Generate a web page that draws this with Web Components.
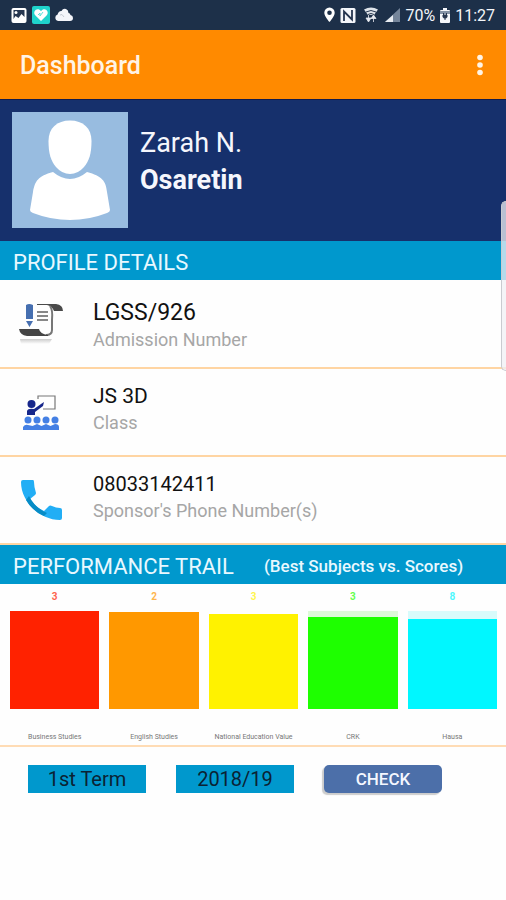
<!DOCTYPE html>
<html lang="en">
<head>
<meta charset="utf-8">
<meta name="viewport" content="width=device-width, initial-scale=1">
<title>Dashboard</title>
<style>
body { margin: 0; background: #fefefe; font-family: Roboto, "Noto Sans", sans-serif; color: #111; }
</style>
</head>
<body>
<student-dashboard></student-dashboard>
<script>
const define = (name, html, setup) => customElements.define(name, class extends HTMLElement {
  connectedCallback() {
    if (this.shadowRoot) return;
    const root = this.attachShadow({ mode: 'open' });
    const template = document.createElement('template');
    template.innerHTML = html;
    root.append(template.content.cloneNode(true));
    if (setup) setup(this, root);
  }
});

define('status-bar', `
<style>
:host { display: flex; justify-content: space-between; align-items: center; height: 30px; padding: 0 11px; background: #1d3049; color: #f4f6fa; }
div { display: flex; align-items: center; gap: 4px; }
svg { display: block; }
span { font-size: 16px; line-height: 30px; padding-top: 2px; white-space: nowrap; }
</style>
<div>
  <svg width="17" height="17" viewBox="0 0 17 17"><rect x=".5" y="1" width="15" height="15" rx="2" fill="#fff"/><path d="M2.500 3h11v7l-3-3-3 4-3-2-2 3z" fill="#26364f"/><circle cx="5" cy="5.500" r="1.500" fill="#fff"/></svg>
  <svg width="18" height="18" viewBox="0 0 18 18"><rect width="18" height="18" rx="2" fill="#1fd3cb"/><path d="M9 15 3.200 9.200C.7 6.500 3.500 2.500 6.500 3.300Q8.200 3.700 9 5.200Q9.800 3.700 11.500 3.300C14.500 2.500 17.300 6.500 14.800 9.200z" fill="#fff"/><path d="M6 9l2-2v3l3-4" fill="none" stroke="#5ee0d8"/></svg>
  <svg width="20" height="16" viewBox="0 0 20 16"><path d="M4 14a3.300 3.300 0 0 1-.4-6.400Q4.500 3.800 7.500 4 9 1 12 2q2.500 1 2.500 4 1.500 0 2 2 2.500.5 2.500 3 0 3-3 3z" fill="#f4f5fa"/><path d="M6 8q2-2 4 2" fill="none" stroke="#c5cad3"/></svg>
</div>
<div>
  <svg width="13" height="18" viewBox="0 0 13 18"><path d="M6.500 1.500a5.200 5.200 0 0 0-5.200 5.200C1.300 10.500 6.500 16 6.500 16s5.200-5.500 5.200-9.300a5.200 5.200 0 0 0-5.200-5.200zm0 3a2.300 2.300 0 1 1 0 4.600 2.300 2.300 0 0 1 0-4.600z" fill="#fff" fill-rule="evenodd"/></svg>
  <svg width="16" height="17" viewBox="0 0 16 17"><rect x=".5" y="1" width="15" height="15" rx="1.500" fill="#f4f6fa"/><path d="M4 14V4.500l8 8V3" fill="none" stroke="#26364f" stroke-width="1.800"/></svg>
  <svg width="20" height="18" viewBox="0 0 20 18"><path d="M4 3.500Q11 -.5 18 3.500L14 9H8z" fill="#dfe4ea"/><path d="M6 6q5-3 10 0M8 8.500q3-2 6 0" fill="none" stroke="#26364f"/><path d="M8.500 9v4M6 12l2.500 4 2.500-4zM13.500 16v-4M11 12.500l2.500-3.500 2.500 3.500z" fill="#e7eaf0" stroke="#e7eaf0" stroke-width=".8"/></svg>
  <svg width="17" height="16" viewBox="0 0 17 16"><path d="M1 15 16 1v14z" fill="#75859a"/><path d="M1 15 9 8v7z" fill="#e8ecf1"/></svg>
  <span>70%</span>
  <svg width="12" height="17" viewBox="0 0 12 17"><path d="M4 1h4v2h2q1 0 1 1v11q0 1-1 1H2q-1 0-1-1V4q0-1 1-1h2z" fill="#f4f6fa"/><path d="M1 4h10v3H1z" fill="#8492a5"/><path d="M4.500 6v2M7.500 6v2M4 8h4v2q0 1-2 1t-2-1zM6 10v3" fill="#26364f" stroke="#26364f"/></svg>
  <span>11:27</span>
</div>`);

define('app-toolbar', `
<style>
:host { display: flex; justify-content: space-between; align-items: center; box-sizing: border-box; height: 69px; padding: 2px 20px 0; background: #ff8a00; color: #fff4e6; }
h1 { margin: 0; font-size: 25px; line-height: 32px; font-weight: 500; }
button { display: block; padding: 0; border: 0; background: none; color: #fff4e6; }
svg { display: block; }
</style>
<h1><slot></slot></h1>
<button type="button" aria-label="More options"><svg width="12" height="24" viewBox="0 0 12 24" fill="currentColor"><circle cx="6" cy="3.500" r="2.800"/><circle cx="6" cy="11" r="2.800"/><circle cx="6" cy="18.500" r="2.800"/></svg></button>`);

define('profile-banner', `
<style>
:host { display: flex; gap: 12px; padding: 12px; background: #16306c; color: #f5f6fc; border-top: 1px solid #121c4b; box-sizing: border-box; height: 142px; }
svg { flex: none; display: block; }
p { margin: 0; font-size: 27px; line-height: 37px; }
p + p { font-weight: 700; }
div { padding-top: 13px; }
</style>
<svg width="116" height="116" viewBox="0 0 116 116" role="img" aria-label="Student photo"><rect width="116" height="116" fill="#98bce0"/><path d="M58 8.500C45 8.500 36.500 16 36.500 29C36.500 42 39 49 44 55Q50 62 58 62Q66 62 72 55C77 49 79.500 42 79.500 29C79.500 16 71 8.500 58 8.500Z" fill="#fff"/><path d="M41 60Q58 74 75 60C90 64 94 69 95 80L98 98Q98 100 95 101Q77 108 58 108Q39 108 21 101Q18 100 18 98L21 80C23 69 26 64 41 60Z" fill="#fff"/></svg>
<div><p><slot name="first"></slot></p><p><slot name="last"></slot></p></div>`);

define('section-title', `
<style>
:host { display: flex; align-items: center; gap: 30px; box-sizing: border-box; height: 39px; padding: 4px 13px 0; background: #0098cd; color: #e9f8ff; white-space: nowrap; }
h2 { margin: 0; font-size: 22px; line-height: 35px; font-weight: 400; }
::slotted(span) { font-size: 17px; line-height: 35px; font-weight: 500; }
</style>
<h2><slot></slot></h2><slot name="note"></slot>`);

define('detail-row', `
<style>
:host { display: flex; align-items: center; gap: 30px; box-sizing: border-box; height: 88px; padding: 0 18px; background: #fefefe; border-bottom: 2px solid #ffd5a3; }
:host([lead]) { height: 89px; }
::slotted(svg) { flex: none; display: block; }
dl { margin: 0; padding-bottom: 6px; display: flex; flex-direction: column; }
:host([lead]) dl { padding: 4px 0 0; }
dt { order: 2; font-size: 18px; line-height: 26px; color: #a6a6a6; }
dd { margin: 0; order: 1; font-size: var(--value-size, 21px); line-height: 28px; color: #111; }
</style>
<slot name="icon"></slot>
<dl><dt><slot name="label"></slot></dt><dd><slot></slot></dd></dl>`);

define('subject-bar', `
<style>
:host { display: flex; flex-direction: column; align-items: center; flex: 1 1 0; min-width: 0; white-space: nowrap; }
.score { font-size: 10px; line-height: 12px; font-weight: 700; color: var(--bar); opacity: .7; }
.track { align-self: stretch; display: flex; align-items: flex-end; height: 98px; margin: 8px 0 22px; background: var(--track, transparent); }
.fill { flex: 1; background: var(--bar); }
.name { font-size: 7px; line-height: 12px; color: #777; }
</style>
<span class="score"></span><div class="track"><div class="fill"></div></div><span class="name"><slot></slot></span>`,
(host, root) => {
  root.querySelector('.score').textContent = host.getAttribute('score');
  root.querySelector('.fill').style.height = host.getAttribute('level') + '%';
});

define('subject-chart', `
<style>
:host { display: flex; gap: 10px; box-sizing: border-box; height: 163px; padding: 7px 9px 0 10px; background: #fefefe; border-bottom: 2px solid #ffdcb5; }
</style>
<slot></slot>`);

define('term-form', `
<style>
:host { display: block; }
form { display: flex; align-items: center; gap: 30px; padding: 18px 28px; }
select, button { box-sizing: border-box; flex: 0 0 118px; height: 28px; margin: 0; padding: 0; font-family: inherit; text-align: center; text-align-last: center; }
select { appearance: none; border: 0; border-radius: 0; background: #0098cd; color: #0b2233; font-size: 20px; }
button { border: 0; border-radius: 5px; background: #4c6fa9; color: #f4f7ff; font-size: 17px; font-weight: 500; box-shadow: -2px 2px 1px #ccc; }
</style>
<form>
<select aria-label="Term"><option>1st Term</option><option>2nd Term</option><option>3rd Term</option></select>
<select aria-label="Session"><option>2018/19</option><option>2017/18</option></select>
<button type="button">CHECK</button>
</form>`);

define('edge-handle', `
<style>
:host { position: absolute; top: 201px; right: 0; width: 5px; height: 170px; box-sizing: border-box; border: 1px solid #c9cbd0; border-right: 0; border-radius: 5px 0 0 5px; background: rgba(240,240,244,.75); }
</style>`);

define('student-dashboard', `
<style>
:host { display: block; position: relative; }
</style>
<status-bar></status-bar>
<app-toolbar>Dashboard</app-toolbar>
<profile-banner><span slot="first">Zarah N.</span><span slot="last">Osaretin</span></profile-banner>
<section-title>PROFILE DETAILS</section-title>
<detail-row lead style="--value-size:23px">
  <svg slot="icon" width="45" height="44" viewBox="0 0 45 44"><defs><linearGradient id="shade" x2="0" y2="1"><stop stop-color="#ccc"/><stop offset="1" stop-color="#fff"/></linearGradient></defs><path d="M2 37h32l-3 5H3z" fill="url(#shade)"/><path d="M19 2H38Q45 3 45 9H36Q34 4 29 3H19z" fill="#4a4a4a"/><path d="M32 4Q35 8 34 18V28Q34 33 28 33" fill="none" stroke="#777" stroke-width="2"/><path d="M1 27H21Q22 32 30 33V34H9Q2 33 1 27z" fill="#444"/><path d="M19 10h11M19 14h11M19 18h11" stroke="#888" stroke-width="2"/><path d="M8 3Q11 1 15 3V17H8zM8 19h7l-3.500 6z" fill="#466fb0"/></svg>
  LGSS/926<span slot="label">Admission Number</span>
</detail-row>
<detail-row>
  <svg slot="icon" width="45" height="44" viewBox="0 0 45 44"><path d="M20 9V6H37V19H25" fill="none" stroke="#777" stroke-width="1.200"/><circle cx="13.500" cy="14" r="4" fill="#17278b"/><path d="M9 25V21Q10 18 16 19L23 14 26 12 25 16 17 22V25z" fill="#17278b"/><g fill="#4480e4"><circle cx="10" cy="30" r="3.500"/><circle cx="19" cy="30" r="3.500"/><circle cx="28" cy="30" r="3.500"/><circle cx="37" cy="30" r="3.500"/><path d="M5 40V37Q7 34 10 35L14.500 36 19 34 23.500 36 28 34 32.500 36 37 34Q41 34 41 37V40z"/></g></svg>
  JS 3D<span slot="label">Class</span>
</detail-row>
<detail-row style="--value-size:20px">
  <svg slot="icon" width="45" height="44" viewBox="0 0 45 44"><path d="M3 4Q3 2 5 2H15Q16 2 16 4 16 9 18 15 18 16 17 17L12 21Q17 29 26 33L31 28Q32 27 34 28 38 30 42 30 44 30 44 32V40Q44 42 42 42C22 42 3 24 3 4z" fill="#22aef5"/><path d="M11 18Q17 30 29 35L26 38Q14 33 8 22z" fill="#078cc6"/></svg>
  08033142411<span slot="label">Sponsor's Phone Number(s)</span>
</detail-row>
<section-title>PERFORMANCE TRAIL<span slot="note">(Best Subjects vs. Scores)</span></section-title>
<subject-chart>
  <subject-bar score="3" level="100" style="--bar:#ff2200">Business Studies</subject-bar>
  <subject-bar score="2" level="99" style="--bar:#ff9800">English Studies</subject-bar>
  <subject-bar score="3" level="97" style="--bar:#fff200">National Education Value</subject-bar>
  <subject-bar score="3" level="94" style="--bar:#1eff00;--track:#ddf9d8">CRK</subject-bar>
  <subject-bar score="8" level="92" style="--bar:#00f7ff;--track:#d8fbfb">Hausa</subject-bar>
</subject-chart>
<term-form></term-form>
<edge-handle></edge-handle>`);
</script>
</body>
</html>
